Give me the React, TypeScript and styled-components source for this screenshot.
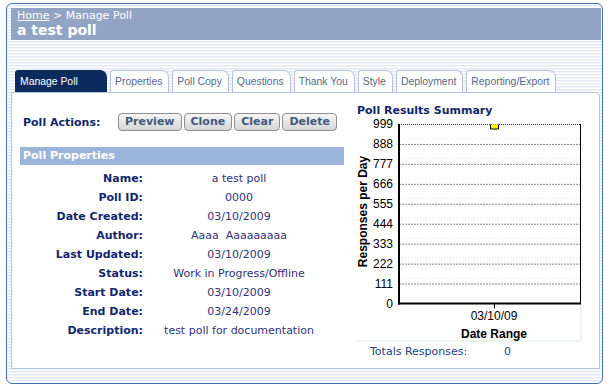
import React from 'react'
import styled, { createGlobalStyle } from 'styled-components'

const GlobalStyle = createGlobalStyle`
  html, body {
    margin: 0;
    padding: 0;
    background: #ffffff;
  }
  body {
    font-family: "DejaVu Sans", Verdana, sans-serif;
  }
`

const Frame = styled.div`
  box-sizing: border-box;
  margin: 3px 0 0 6px;
  width: 597px;
  height: 381px;
  padding: 4px 1px 0 4px;
  border: 1px solid #4572a9;
  border-radius: 6px;
  background: repeating-linear-gradient(
    to bottom,
    #ffffff 0px,
    #ffffff 1px,
    #e2e9f4 1px,
    #e2e9f4 2px,
    #f1f5fb 2px,
    #f1f5fb 3px
  );
  display: flex;
  flex-direction: column;
`

const Header = styled.div`
  height: 32px;
  box-sizing: border-box;
  padding: 1px 6px 0;
  background: #91a4c3;
  color: #ffffff;
`

const Crumbs = styled.div`
  font-size: 11px;
  line-height: 13px;

  a {
    color: #ffffff;
    text-decoration: underline;
  }
`

const Title = styled.div`
  font-size: 14px;
  font-weight: bold;
  line-height: 17px;
`

const TabBar = styled.div`
  display: flex;
  gap: 3px;
  height: 22px;
  margin: 30px 0 0 4px;
`

const Tab = styled.div<{ $active?: boolean }>`
  box-sizing: border-box;
  height: 22px;
  min-width: ${(p) => (p.$active ? '92px' : '0')};
  padding: 0 6px 0 4px;
  border: 1px solid ${(p) => (p.$active ? '#0b2b5c' : '#b2c2d9')};
  border-bottom: none;
  border-radius: 3px 7px 0 0;
  background: ${(p) => (p.$active ? '#0b2b5c' : '#ffffff')};
  color: ${(p) => (p.$active ? '#ffffff' : '#56688a')};
  font: 10.4px "Liberation Sans", Arial, sans-serif;
  line-height: 21px;
  white-space: nowrap;
`

const Panel = styled.div`
  box-sizing: border-box;
  width: 589px;
  height: 277px;
  border: 1px solid #b5c5dc;
  border-top-right-radius: 5px;
  background: #ffffff;
  padding-left: 8px;
  display: grid;
  grid-template-columns: 324px 1fr;
  column-gap: 12px;
`

const LeftCol = styled.div`
  padding-top: 20px;
`

const ActionsRow = styled.div`
  display: flex;
  align-items: center;
  gap: 2px;
  height: 18px;
`

const ActionsLabel = styled.div`
  box-sizing: border-box;
  width: 96px;
  padding-left: 3px;
  font-size: 11px;
  font-weight: bold;
  color: #12266b;
`

const ActionButton = styled.button`
  box-sizing: border-box;
  height: 18px;
  margin: 0;
  padding: 0 6px;
  border: 1px solid #8e8e8e;
  border-radius: 4px;
  background: linear-gradient(to bottom, #f6f6f6, #d6d6d6);
  font-family: "DejaVu Sans", Verdana, sans-serif;
  font-size: 11px;
  font-weight: bold;
  line-height: 16px;
  color: #44597b;
`

const SectionBar = styled.div`
  margin-top: 16px;
  height: 18px;
  padding-left: 3px;
  background: #9bb5da;
  color: #ffffff;
  font-size: 11px;
  font-weight: bold;
  line-height: 18px;
`

const PropsTable = styled.div`
  margin-top: 4px;
  display: grid;
  grid-template-columns: 123px 184px;
  column-gap: 4px;
  grid-auto-rows: 19px;
  align-items: center;
  font-size: 11px;
`

const PropLabel = styled.div`
  text-align: right;
  font-weight: bold;
  color: #12266b;
`

const PropValue = styled.div`
  text-align: center;
  color: #2f3278;
  white-space: pre;
`

const RightCol = styled.div`
  padding-top: 11px;
`

const ChartTitle = styled.div`
  padding-left: 1px;
  font-size: 11px;
  font-weight: bold;
  line-height: 13px;
  color: #12266b;
`

const ChartSvg = styled.svg`
  display: block;
  font-family: "Liberation Sans", Arial, sans-serif;
  font-size: 12px;
`

const Totals = styled.div`
  display: flex;
  padding-left: 14px;
  font-size: 11px;
  line-height: 13px;
  color: #203f86;
`

const TotalsLabel = styled.span`
  width: 134px;
`

const props: [string, string][] = [
  ['Name:', 'a test poll'],
  ['Poll ID:', '0000'],
  ['Date Created:', '03/10/2009'],
  ['Author:', 'Aaaa  Aaaaaaaaa'],
  ['Last Updated:', '03/10/2009'],
  ['Status:', 'Work in Progress/Offline'],
  ['Start Date:', '03/10/2009'],
  ['End Date:', '03/24/2009'],
  ['Description:', 'test poll for documentation'],
]

const tabs = [
  'Manage Poll',
  'Properties',
  'Poll Copy',
  'Questions',
  'Thank You',
  'Style',
  'Deployment',
  'Reporting/Export',
]

const ticks = [999, 888, 777, 666, 555, 444, 333, 222, 111, 0]

// plot box inside the svg
const PL = 43
const PR = 224
const PT = 7
const PB = 186.5
const STEP = (PB - PT) / 9

const Chart = () => (
  <ChartSvg width={230} height={228}>
    <line x1={0} y1={224} x2={PR + 1} y2={224} stroke="#dcefdc" />
    <line x1={PR + 1} y1={PB} x2={PR + 1} y2={224} stroke="#dcefdc" />
    {ticks.map((t, i) => {
      const y = PT + i * STEP
      return (
        <g key={t}>
          {i < 9 && (
            <line x1={PL} x2={PR} y1={y + 0.5 + 14} y2={y + 0.5 + 14} stroke="#e4e4e4" strokeDasharray="1 2" />
          )}
          {i > 0 && i < 9 && (
            <line x1={PL} x2={PR} y1={y + 0.5} y2={y + 0.5} stroke="#8a8a8a" strokeDasharray="2 1" />
          )}
          <text x={37} y={y + 4.3} textAnchor="end" fill="#000">
            {t}
          </text>
        </g>
      )
    })}
    <line x1={PL} x2={PR} y1={PT + 0.5} y2={PT + 0.5} stroke="#333" strokeDasharray="1 1" />
    <line x1={PR + 0.5} x2={PR + 0.5} y1={PT} y2={PB} stroke="#000" />
    <line x1={PL} x2={PL} y1={PT} y2={PB + 1} stroke="#000" strokeWidth={2} />
    <line x1={PL - 1} x2={PR + 1} y1={PB} y2={PB} stroke="#000" strokeWidth={2} />
    <line x1={138.5} x2={138.5} y1={PB} y2={PB + 5} stroke="#000" />
    <path d="M134.5 7.5 V12 H142.5 V7.5" fill="#ffff00" stroke="#000" />
    <text x={138} y={202.5} textAnchor="middle">
      03/10/09
    </text>
    <text x={138} y={221} textAnchor="middle" fontWeight="bold">
      Date Range
    </text>
    <text x={11} y={94.5} textAnchor="middle" fontWeight="bold" transform="rotate(-90 11 94.5)">
      Responses per Day
    </text>
  </ChartSvg>
)

export default function App() {
  return (
    <>
      <GlobalStyle />
      <Frame>
        <Header>
          <Crumbs>
            <a href="#">Home</a> &gt; Manage Poll
          </Crumbs>
          <Title>a test poll</Title>
        </Header>
        <TabBar>
          {tabs.map((t, i) => (
            <Tab key={t} $active={i === 0}>
              {t}
            </Tab>
          ))}
        </TabBar>
        <Panel>
          <LeftCol>
            <ActionsRow>
              <ActionsLabel>Poll Actions:</ActionsLabel>
              <ActionButton>Preview</ActionButton>
              <ActionButton>Clone</ActionButton>
              <ActionButton>Clear</ActionButton>
              <ActionButton>Delete</ActionButton>
            </ActionsRow>
            <SectionBar>Poll Properties</SectionBar>
            <PropsTable>
              {props.map(([k, v]) => (
                <React.Fragment key={k}>
                  <PropLabel>{k}</PropLabel>
                  <PropValue>{v}</PropValue>
                </React.Fragment>
              ))}
            </PropsTable>
          </LeftCol>
          <RightCol>
            <ChartTitle>Poll Results Summary</ChartTitle>
            <Chart />
            <Totals>
              <TotalsLabel>Totals Responses:</TotalsLabel>
              <span>0</span>
            </Totals>
          </RightCol>
        </Panel>
      </Frame>
    </>
  )
}
